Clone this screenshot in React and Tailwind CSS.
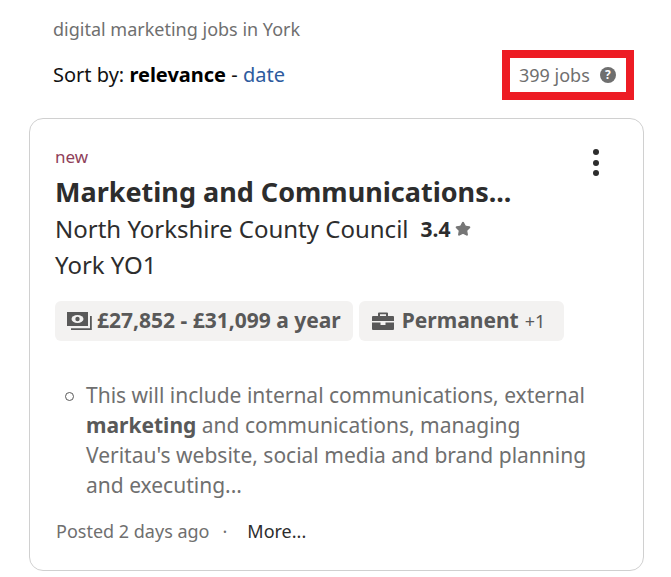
import { Star } from "lucide-react"

function MoneyIcon() {
  return (
    <svg width="25" height="20" viewBox="0 0 25 20" className="shrink-0">
      <path fill="#595959" d="M0 1h21v14H0z" />
      <ellipse cx="10.5" cy="8" rx="6" ry="4" fill="#f3f2f1" />
      <circle cx="10.500" cy="8" r="2.200" fill="#595959" />
      <path fill="#595959" d="M23 5h1.800v14H4v-1.800h19z" />
    </svg>
  )
}

function CaseIcon() {
  return (
    <svg width="22" height="20" viewBox="0 0 22 20" className="shrink-0">
      <path fill="#595959" d="M7 1.500h8a1 1 0 0 1 1 1V5h5a1 1 0 0 1 1 1v4H0V6a1 1 0 0 1 1-1h5V2.500a1 1 0 0 1 1-1zM8 3.300V5h6V3.300z" />
      <path fill="#595959" d="M0 11.500h8.500V14h5v-2.500H22V18a1 1 0 0 1-1 1H1a1 1 0 0 1-1-1z" />
    </svg>
  )
}

export default function App() {
  return (
    <div className="w-[671px] h-[577px] bg-white overflow-hidden font-['Noto_Sans',sans-serif]">
      <div className="pl-[53px] pt-[17px] text-[18px] leading-[24px] text-[#6f6f6f]">digital marketing jobs in York</div>

      <div className="flex items-center justify-between pl-[53px] pr-[37px] mt-[9px]">
        <div className="text-[20px] leading-[26px] text-[#111]">
          Sort by: <b className="font-bold text-black">relevance</b> - <span className="text-[#2d5b9e]">date</span>
        </div>
        <div className="flex items-center h-[50px] w-[132px] border-[8px] border-[#ed1c24] pl-[9px] text-[18px] text-[#6f6f6f]">
          399 jobs
          <span className="ml-[10px] w-[16px] h-[16px] rounded-full bg-[#6f6f6f] text-white text-[12px] font-bold leading-[16px] text-center">?</span>
        </div>
      </div>

      <div className="relative ml-[29px] mt-[18px] w-[615px] h-[453px] border border-[#d0d0d0] rounded-[14px] pl-[25px] pt-[27px]">
        <div className="absolute right-[44px] top-[30px] flex flex-col gap-[4.5px]">
          <span className="w-[6px] h-[6px] rounded-full bg-[#2d2d2d]" />
          <span className="w-[6px] h-[6px] rounded-full bg-[#2d2d2d]" />
          <span className="w-[6px] h-[6px] rounded-full bg-[#2d2d2d]" />
        </div>

        <div className="text-[17px] leading-[22px] text-[#8f3f5a]">new</div>
        <div className="mt-[4px] text-[27px] leading-[39px] font-bold text-[#2d2d2d]">Marketing and Communications...</div>
        <div className="flex items-center text-[24px] leading-[36px] text-[#2d2d2d]">
          North Yorkshire County Council
          <span className="ml-[12px] text-[21px] font-bold">3.4</span>
          <Star size={16} fill="#767676" stroke="#767676" className="ml-[5px]" />
        </div>
        <div className="text-[24px] leading-[36px] text-[#2d2d2d]">York YO1</div>

        <div className="flex gap-[6px] mt-[18px]">
          <div className="flex items-center gap-[5px] h-[40px] px-[12px] rounded-[6px] bg-[#f3f2f1] text-[21px] font-bold text-[#595959]">
            <MoneyIcon />
            £27,852 - £31,099 a year
          </div>
          <div className="flex items-center h-[40px] pl-[13px] pr-[19px] rounded-[6px] bg-[#f3f2f1] text-[21px] font-bold text-[#595959]">
            <CaseIcon />
            <span className="ml-[8px]">Permanent</span>
            <span className="ml-[6px] text-[18px] font-normal">+1</span>
          </div>
        </div>

        <div className="flex mt-[39px] pr-[40px] text-[#6f6f6f]">
          <span className="shrink-0 w-[9px] h-[9px] mt-[12px] ml-[10px] mr-[12px] border border-[#595959] rounded-full" />
          <p className="text-[21px] leading-[30px]">
            This will include internal communications, external <b className="font-bold text-[#595959]">marketing</b> and communications, managing Veritau's website, social media and brand planning and executing...
          </p>
        </div>

        <div className="flex items-center mt-[18px] ml-[1px] text-[18px] leading-[26px]">
          <span className="text-[#6f6f6f]">Posted 2 days ago</span>
          <span className="ml-[13px] text-[#6f6f6f]">·</span>
          <span className="ml-[20px] text-[#2d2d2d]">More...</span>
        </div>
      </div>
    </div>
  )
}
